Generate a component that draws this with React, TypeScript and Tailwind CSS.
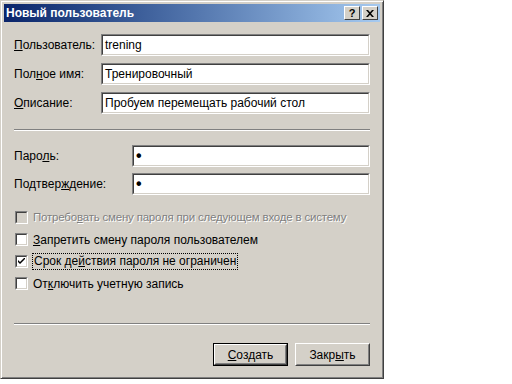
import type { ReactNode } from "react"

const font = { fontFamily: '"Liberation Sans", Arial, sans-serif' }

function U({ children }: { children: ReactNode }) {
  return <span className="underline underline-offset-[1px]">{children}</span>
}

function Field({ value, className = "", dot }: { value: string; className?: string; dot?: boolean }) {
  return (
    <div className={`h-[22px] border border-t-[#808080] border-l-[#808080] border-r-white border-b-white ${className}`}>
      <div className={`h-full border border-t-[#404040] border-l-[#404040] border-r-[#d4d0c8] border-b-[#d4d0c8] bg-white px-[2px] leading-[18px] text-black ${dot ? "text-[16px] font-bold" : "text-[12px]"}`}>
        {value}
      </div>
    </div>
  )
}

function Box({ checked, disabled }: { checked?: boolean; disabled?: boolean }) {
  return (
    <div className="h-[13px] w-[13px] shrink-0 border border-t-[#808080] border-l-[#808080] border-r-white border-b-white">
      <div className={`flex h-full items-center justify-center border border-t-[#404040] border-l-[#404040] border-r-[#d4d0c8] border-b-[#d4d0c8] ${disabled ? "bg-[#d4d0c8]" : "bg-white"}`}>
        {checked && (
          <svg width="7" height="7" viewBox="0 0 7 7">
            <path d="M0 2 L0 4 L2 6 L7 1 L7 -1 L2 4 Z" fill="black" />
          </svg>
        )}
      </div>
    </div>
  )
}

function Btn({ children, def }: { children: ReactNode; def?: boolean }) {
  return (
    <div className={`h-[23px] w-[75px] ${def ? "border border-black" : ""}`}>
      <div className="h-full border border-t-white border-l-white border-r-[#404040] border-b-[#404040]">
        <div className="flex h-full items-center justify-center border border-t-[#d4d0c8] border-l-[#d4d0c8] border-r-[#808080] border-b-[#808080] text-[12px] text-black">
          {children}
        </div>
      </div>
    </div>
  )
}

function Sep() {
  return <div className="h-[2px] border-t border-t-[#808080] border-b border-b-white" />
}

export default function App() {
  return (
    <div className="h-[384px] w-[512px] bg-white" style={font}>
      <div className="flex h-[379px] w-[384px] flex-col border border-t-[#d4d0c8] border-l-[#d4d0c8] border-r-[#404040] border-b-[#404040] bg-[#d4d0c8] p-[3px] shadow-[inset_1px_1px_0_#fff,inset_-1px_-1px_0_#808080]">
        <div className="flex h-[18px] items-center justify-between bg-gradient-to-r from-[#0a246a] to-[#a6caf0] pl-[2px] pr-[2px]">
          <span className="text-[12px] font-bold text-white">Новый пользователь</span>
          <div className="flex gap-[2px]">
            <div className="flex h-[14px] w-[16px] items-center justify-center border border-t-white border-l-white border-r-[#404040] border-b-[#404040] bg-[#d4d0c8] text-[11px] font-bold leading-none text-black">?</div>
            <div className="flex h-[14px] w-[16px] items-center justify-center border border-t-white border-l-white border-r-[#404040] border-b-[#404040] bg-[#d4d0c8]">
              <svg width="8" height="7" viewBox="0 0 8 7">
                <path d="M0 0 L2 0 L4 2.3 L6 0 L8 0 L5 3.5 L8 7 L6 7 L4 4.7 L2 7 L0 7 L3 3.5 Z" fill="black" />
              </svg>
            </div>
          </div>
        </div>

        <div className="flex flex-col px-[10px] text-[12px] text-black">
          <div className="mt-[12px] flex flex-col gap-[7px]">
            <div className="flex items-center">
              <span className="w-[87px]"><U>П</U>ользователь:</span>
              <Field value="trening" className="flex-1" />
            </div>
            <div className="flex items-center">
              <span className="w-[87px]">Пол<U>н</U>ое имя:</span>
              <Field value="Тренировочный" className="flex-1" />
            </div>
            <div className="flex items-center">
              <span className="w-[87px]"><U>О</U>писание:</span>
              <Field value="Пробуем перемещать рабочий стол" className="flex-1" />
            </div>
          </div>

          <div className="mt-[15px]"><Sep /></div>

          <div className="mt-[14px] flex flex-col gap-[6px]">
            <div className="flex items-center">
              <span className="w-[118px]">Паро<U>л</U>ь:</span>
              <Field value="•" dot className="flex-1" />
            </div>
            <div className="flex items-center">
              <span className="w-[118px]">Подтвер<U>ж</U>дение:</span>
              <Field value="•" dot className="flex-1" />
            </div>
          </div>

          <div className="mt-[16px] flex flex-col gap-[9px] pl-[1px]">
            <div className="flex h-[13px] items-center gap-[5px]">
              <Box disabled />
              <span className="whitespace-nowrap text-[11.5px] tracking-[-0.2px] text-[#808080] [text-shadow:1px_1px_0_#fff]">Потребо<U>в</U>ать смену пароля при следующем входе в систему</span>
            </div>
            <div className="flex h-[13px] items-center gap-[5px]">
              <Box />
              <span className="whitespace-nowrap">
                <U>З</U>апретить смену пароля пользователем
              </span>
            </div>
            <div className="flex h-[13px] items-center gap-[4px]">
              <Box checked />
              <span className="whitespace-nowrap border border-dotted border-black px-[1px] leading-[15px]">Срок де<U>й</U>ствия пароля не ограничен</span>
            </div>
            <div className="flex h-[13px] items-center gap-[5px]">
              <Box />
              <span className="whitespace-nowrap">От<U>к</U>лючить учетную запись</span>
            </div>
          </div>

          <div className="mt-[33px]"><Sep /></div>

          <div className="mt-[18px] flex justify-end gap-[7px]">
            <Btn def><U>С</U>оздать</Btn>
            <Btn>Закр<U>ы</U>ть</Btn>
          </div>
        </div>
      </div>
    </div>
  )
}
